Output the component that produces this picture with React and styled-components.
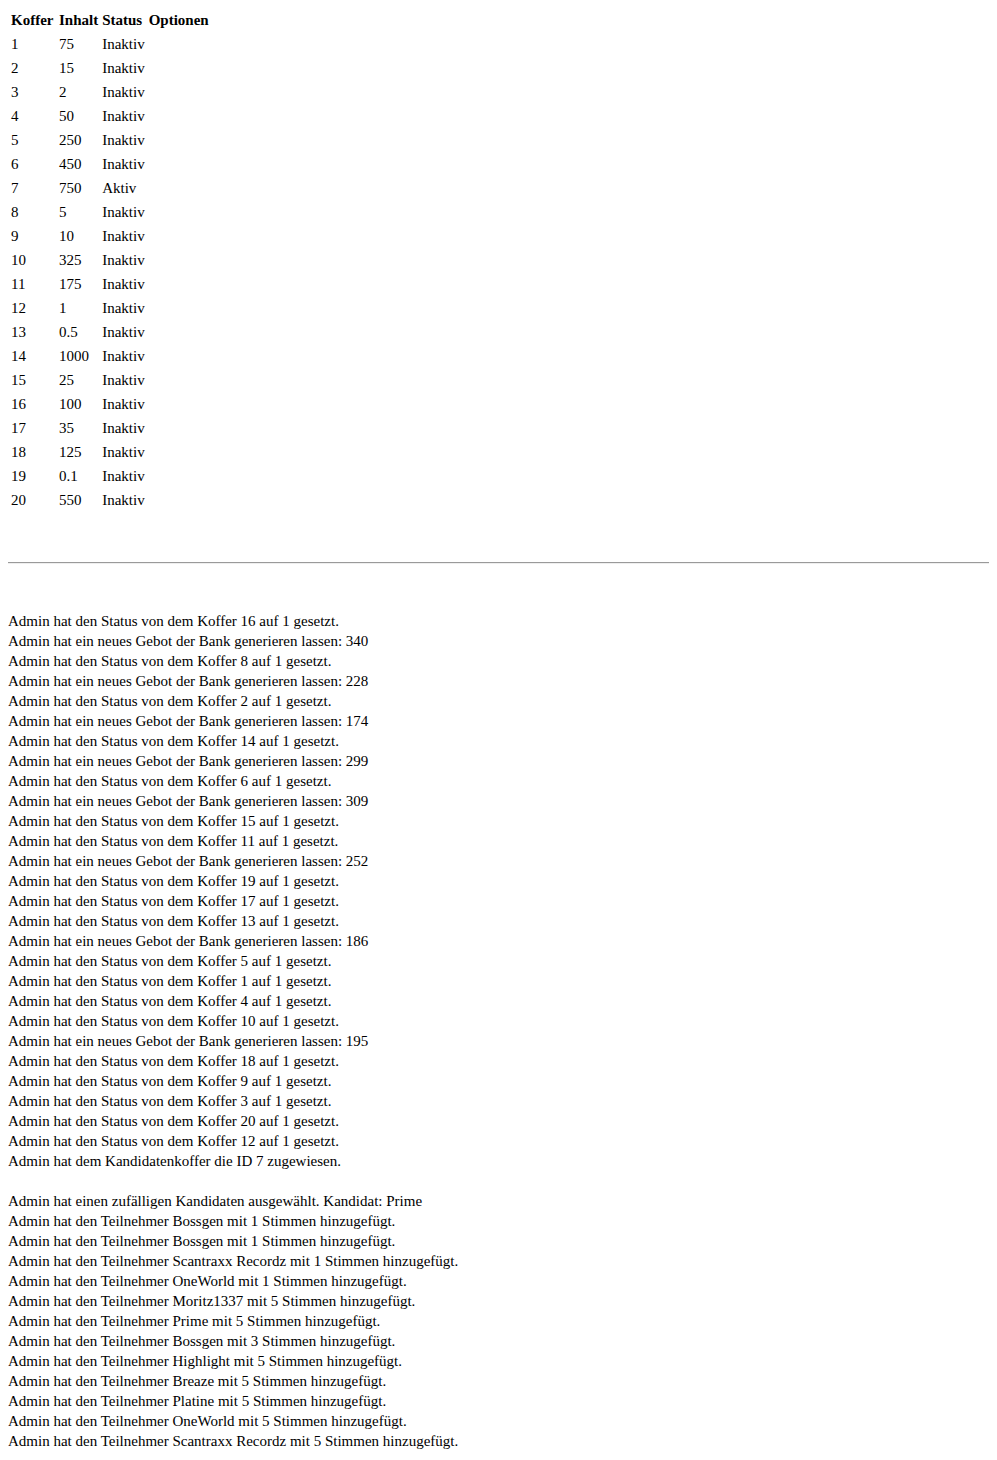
import React from "react"
import styled, { createGlobalStyle } from "styled-components"

const GlobalStyle = createGlobalStyle`
  body {
    margin: 7px 8px 8px 8px;
    font-family: "Liberation Serif", "Times New Roman", serif;
    font-size: 15px;
    line-height: 20px;
    color: #000;
    background: #fff;
  }
`

const Table = styled.table`
  border-spacing: 2px;
  font-size: 15px;
  line-height: 20px;
`

const HeadCell = styled.th`
  padding: 1px;
  font-weight: bold;
  text-align: left;
  white-space: nowrap;
  width: ${(p) => (p.$w ? `${p.$w}px` : "auto")};
`

const Cell = styled.td`
  padding: 1px;
  text-align: left;
`

const Rule = styled.hr`
  margin: 49px 0 47px 0;
  border: none;
  border-top: 1px solid #9a9a9a;
  border-bottom: 1px solid #eeeeee;
`

const Log = styled.div`
  font-size: 15px;
  line-height: 20px;
`

const LogLine = styled.div`
  white-space: nowrap;
`

const Gap = styled.div`
  height: 20px;
`

const koffer = [
  [1, "75", "Inaktiv"],
  [2, "15", "Inaktiv"],
  [3, "2", "Inaktiv"],
  [4, "50", "Inaktiv"],
  [5, "250", "Inaktiv"],
  [6, "450", "Inaktiv"],
  [7, "750", "Aktiv"],
  [8, "5", "Inaktiv"],
  [9, "10", "Inaktiv"],
  [10, "325", "Inaktiv"],
  [11, "175", "Inaktiv"],
  [12, "1", "Inaktiv"],
  [13, "0.5", "Inaktiv"],
  [14, "1000", "Inaktiv"],
  [15, "25", "Inaktiv"],
  [16, "100", "Inaktiv"],
  [17, "35", "Inaktiv"],
  [18, "125", "Inaktiv"],
  [19, "0.1", "Inaktiv"],
  [20, "550", "Inaktiv"],
]

const status = (n) => `Admin hat den Status von dem Koffer ${n} auf 1 gesetzt.`
const gebot = (n) => `Admin hat ein neues Gebot der Bank generieren lassen: ${n}`
const stimmen = (name, n) =>
  `Admin hat den Teilnehmer ${name} mit ${n} Stimmen hinzugefügt.`

const firstLog = [
  status(16),
  gebot(340),
  status(8),
  gebot(228),
  status(2),
  gebot(174),
  status(14),
  gebot(299),
  status(6),
  gebot(309),
  status(15),
  status(11),
  gebot(252),
  status(19),
  status(17),
  status(13),
  gebot(186),
  status(5),
  status(1),
  status(4),
  status(10),
  gebot(195),
  status(18),
  status(9),
  status(3),
  status(20),
  status(12),
  "Admin hat dem Kandidatenkoffer die ID 7 zugewiesen.",
]

const secondLog = [
  "Admin hat einen zufälligen Kandidaten ausgewählt. Kandidat: Prime",
  stimmen("Bossgen", 1),
  stimmen("Bossgen", 1),
  stimmen("Scantraxx Recordz", 1),
  stimmen("OneWorld", 1),
  stimmen("Moritz1337", 5),
  stimmen("Prime", 5),
  stimmen("Bossgen", 3),
  stimmen("Highlight", 5),
  stimmen("Breaze", 5),
  stimmen("Platine", 5),
  stimmen("OneWorld", 5),
  stimmen("Scantraxx Recordz", 5),
]

const App = () => {
  return (
    <>
      <GlobalStyle />
      <Table>
        <thead>
          <tr>
            <HeadCell $w={44}>Koffer</HeadCell>
            <HeadCell $w={39}>Inhalt</HeadCell>
            <HeadCell $w={42}>Status</HeadCell>
            <HeadCell>Optionen</HeadCell>
          </tr>
        </thead>
        <tbody>
          {koffer.map(([id, inhalt, st]) => (
            <tr key={id}>
              <Cell>{id}</Cell>
              <Cell>{inhalt}</Cell>
              <Cell>{st}</Cell>
              <Cell></Cell>
            </tr>
          ))}
        </tbody>
      </Table>
      <Rule />
      <Log>
        {firstLog.map((line, i) => (
          <LogLine key={"a" + i}>{line}</LogLine>
        ))}
        <Gap />
        {secondLog.map((line, i) => (
          <LogLine key={"b" + i}>{line}</LogLine>
        ))}
      </Log>
    </>
  )
}

export default App
